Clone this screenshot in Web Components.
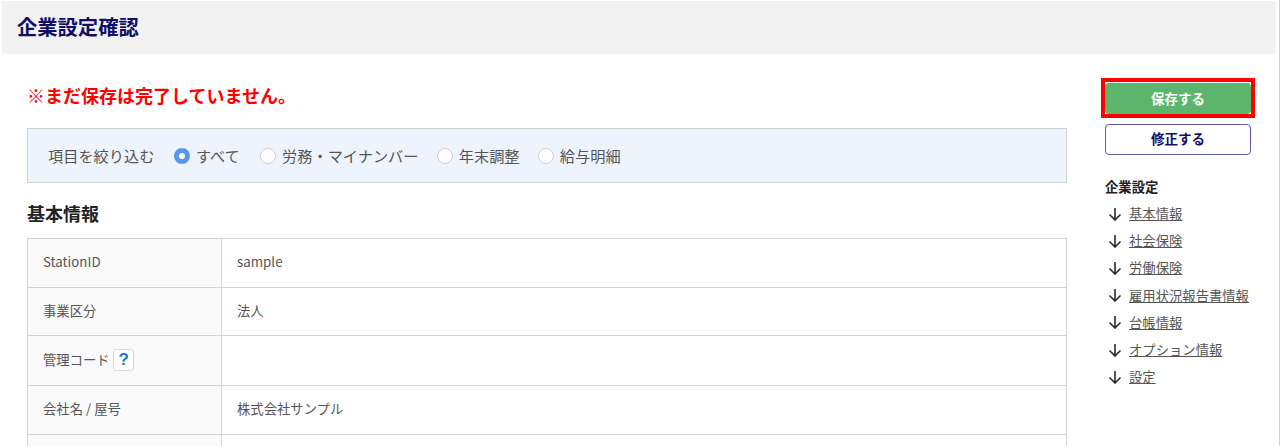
<!DOCTYPE html>
<html lang="ja"><head><meta charset="utf-8">
<style>
html,body{margin:0;padding:0;background:#fff;height:446px;overflow:hidden}
body{font-family:"Noto Sans CJK JP","Liberation Sans",sans-serif;color:#333}
</style></head><body>
<app-page>
  <page-header slot="header">企業設定確認</page-header>
  <div slot="main">
    <warn-text>※まだ保存は完了していません。</warn-text>
    <filter-bar label="項目を絞り込む" options="すべて|労務・マイナンバー|年末調整|給与明細"></filter-bar>
    <section-title>基本情報</section-title>
    <info-table>
      <info-row label="StationID" h="49">sample</info-row>
      <info-row label="事業区分" h="48">法人</info-row>
      <info-row label="管理コード" h="50" help></info-row>
      <info-row label="会社名 / 屋号" h="49">株式会社サンプル</info-row>
      <info-row label="" h="49"></info-row>
    </info-table>
  </div>
  <side-nav slot="side" title="企業設定" items="基本情報|社会保険|労働保険|雇用状況報告書情報|台帳情報|オプション情報|設定"></side-nav>
</app-page>
<script>
const def=(name,css,html)=>customElements.define(name,class extends HTMLElement{
  connectedCallback(){ if(this.shadowRoot)return; const r=this.attachShadow({mode:'open'});
    r.innerHTML=`<style>${css}</style>`+(typeof html==='function'?html(this):html); }
});
def('app-page',`:host{display:block;height:446px;overflow:hidden;padding:1px 3px 0 2px;box-sizing:border-box;border-right:1px solid #d0d0d0}
 .body{display:flex;padding:0 0 0 25px}
 .main{width:1040px;flex:none}
 .side{width:146px;margin-left:38px;flex:none;padding-top:24px}
 `,`<slot name="header"></slot><div class="body"><div class="main"><slot name="main"></slot></div><div class="side"><slot name="side"></slot></div></div>`);
def('page-header',`:host{display:block;height:53px;box-sizing:border-box;background:#f2f2f2;padding:0 15px;font-size:20.3px;font-weight:700;line-height:51px;color:#0f0f6b}`,`<slot></slot>`);
def('warn-text',`:host{display:block;padding-top:28px;height:46px;font-size:18px;font-weight:700;line-height:26px;color:#f00}`,`<slot></slot>`);
def('filter-bar',`:host{display:flex;align-items:center;box-sizing:border-box;height:55px;background:#edf4fe;border:1px solid #d2d2d2;padding:0 20px 2px;font-size:15.2px;color:#555}
 .l{margin-right:19.6px}
 label{display:flex;align-items:center;margin-right:18.3px}
 label:first-of-type{margin-right:20.3px}
 i{display:block;width:16px;height:16px;box-sizing:border-box;border-radius:50%;background:#fff;border:1px solid #cfcfcf;margin-right:6px;position:relative;top:1px}
 i.on{border:5px solid #5596ee}`,
 h=>`<span class="l">${h.getAttribute('label')}</span>`+h.getAttribute('options').split('|').map((o,i)=>`<label><i class="${i?'':'on'}"></i>${o}</label>`).join(''));
def('section-title',`:host{display:block;margin-top:18px;height:37px;font-size:18px;font-weight:700;line-height:24px;color:#222}`,`<slot></slot>`);
def('info-table',`:host{display:block;border:1px solid #d2d2d2;border-bottom:0}`,`<slot></slot>`);
def('info-row',`:host{display:flex;border-bottom:1px solid #d2d2d2;box-sizing:border-box;font-size:13.33px;color:#555}
 .k{width:194px;box-sizing:border-box;flex:none;background:#fafafa;border-right:1px solid #d2d2d2;padding:0 0 3px 15px;display:flex;align-items:center;gap:3.5px}
 .v{flex:1;padding:0 0 3px 15px;display:flex;align-items:center}
 .q{display:inline-flex;align-items:center;justify-content:center;width:21px;height:22px;box-sizing:border-box;border:1px solid #d9d9d9;border-radius:3px;background:#fff;color:#1577cf;font:700 17px "Liberation Sans",sans-serif;position:relative;top:1px}`,
 h=>`<style>:host{height:${h.getAttribute('h')}px}</style><div class="k">${h.getAttribute('label')}${h.hasAttribute('help')?'<span class="q">?</span>':''}</div><div class="v"><slot></slot></div>`);
def('side-nav',`:host{display:block;color:#333}
 .b{display:flex;align-items:center;justify-content:center;box-sizing:border-box;width:146px;border-radius:4px;font-size:13.5px;font-weight:700;padding-bottom:2px}
 .wrap{display:block;width:154px;margin-left:-4px;border:4px solid #f00;box-sizing:border-box;height:40px;background:#fff;padding-top:1px}
 .save{background:#5cb56c;color:#fff;height:31px}
 .fix{margin-top:6px;height:31px;background:#fff;color:#0f0f6b;border:1px solid #5f5fa8;padding-bottom:3px}
 h4{margin:23px 0 4px;font-size:13.33px;line-height:18px;color:#222}
 ul{list-style:none;margin:0;padding:0}
 li{display:flex;align-items:center;height:27.2px;font-size:13.33px;color:#555}
 li span{text-decoration:underline}
 svg{width:14px;height:14px;margin-right:7px;margin-left:3px;flex:none}`,
 h=>`<div class="wrap"><div class="b save">保存する</div></div><div class="b fix">修正する</div><h4>${h.getAttribute('title')}</h4><ul>`+
 h.getAttribute('items').split('|').map(t=>`<li><svg viewBox="0 0 14 14" fill="none" stroke="#2a2a2a" stroke-width="1.6"><path d="M7 1V13M1.5 7.5 7 13l5.5-5.5"/></svg><span>${t}</span></li>`).join('')+`</ul>`);
</script>
</body></html>
